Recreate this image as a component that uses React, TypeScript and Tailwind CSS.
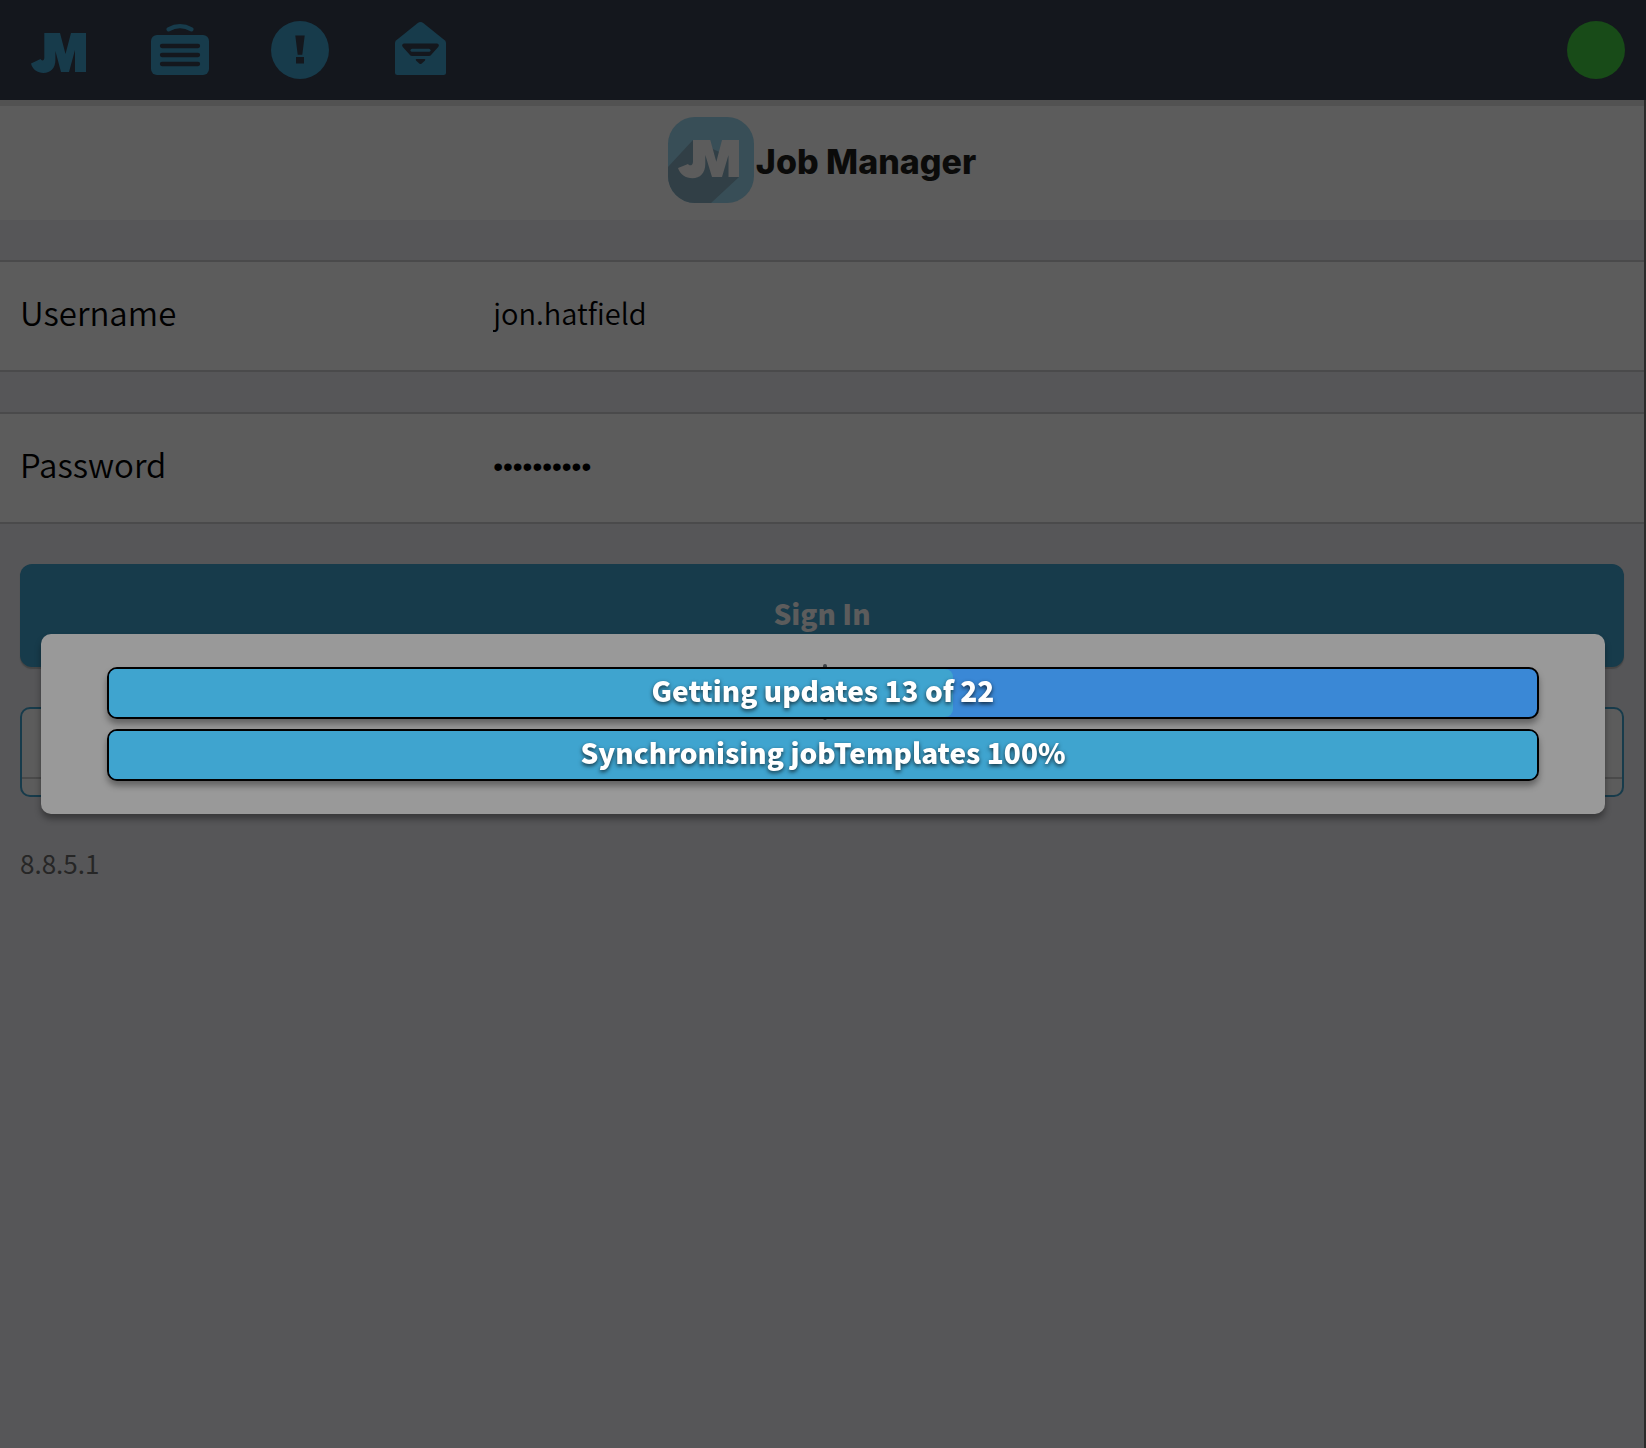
import React, { useState } from "react";

function MarkIcon() {
  return (
    <svg viewBox="30 20 60 60" className="size-[60px]" fill="currentColor" aria-hidden="true">
      <path d="M44.3 33H60L65.5 54L71 33H86V72H75V50L69 72H61L55.4 51V60C55.4 68 50.5 73 43.5 73C37.500 73 32.5 69.500 31 63.500L40.500 59C41.500 61 44.300 61 44.300 58Z" />
    </svg>
  );
}

function JobsIcon() {
  return (
    <svg viewBox="150 20 60 60" className="size-[60px]" aria-hidden="true">
      <path d="M168.500 29.300Q180 23 191.500 29.300" fill="none" stroke="currentColor" strokeWidth="4.300" strokeLinecap="round" />
      <rect x="151" y="35" width="58" height="40" rx="6" fill="currentColor" />
      <path d="M162 46H198M162 55H198M162 64H198" stroke="#14171d" strokeWidth="4.300" strokeLinecap="round" />
    </svg>
  );
}

function AlertIcon() {
  return (
    <svg viewBox="270 20 60 60" className="size-[60px]" aria-hidden="true">
      <circle cx="300" cy="50" r="29" fill="currentColor" />
      <path d="M295.300 35.500H304.700L302.300 54.700H297.700ZM296 57H304V63.500H296Z" fill="#14171d" />
    </svg>
  );
}

function MailIcon() {
  return (
    <svg viewBox="390 20 60 60" className="size-[60px]" aria-hidden="true">
      <path d="M417.500 23.200Q420.500 20.800 423.500 23.200L445 40.500Q446 41.500 446 43V72.500Q446 75 443.500 75H397.500Q395 75 395 72.500V43Q395 41.500 396 40.500Z" fill="currentColor" />
      <path d="M404 43.500H437Q440 44.500 438.200 47L431.500 54.500Q430.500 56 428.500 56H412.500Q410.500 56 409.500 54.500L402.800 47Q401 44.500 404 43.500Z" fill="#14171d" />
      <path d="M412 50.300H429" stroke="currentColor" strokeWidth="3" strokeLinecap="round" />
      <path d="M416.500 59H424.500Q426 59.300 424.800 60.700L421.700 63.500Q420.500 64.500 419.300 63.500L416.200 60.700Q415 59.300 416.500 59Z" fill="#14171d" />
    </svg>
  );
}

function Logo() {
  return (
    <svg viewBox="0 0 86 86" className="size-[86px]" aria-hidden="true">
      <defs>
        <clipPath id="tile">
          <rect width="86" height="86" rx="27" />
        </clipPath>
      </defs>
      <g clipPath="url(#tile)">
        <rect width="86" height="86" fill="#384e57" />
        <path d="M25 23L0 50V86H43L71 60V44Z" fill="#313f46" />
        <path d="M25 23H42.300L48.300 44.700L54 23H71V60H60.500V38L54 60H44L37.300 38V47C37.300 56 32 61.300 24.500 61.300C17.500 61.300 12 57.500 10 51L20 47C21.500 49.500 25 48.500 25 44.700Z" fill="#5c5c5c" />
      </g>
    </svg>
  );
}

const navItems = [
  { label: "Home", Icon: MarkIcon },
  { label: "Jobs", Icon: JobsIcon },
  { label: "Alerts", Icon: AlertIcon },
  { label: "Messages", Icon: MailIcon },
];

function Field({ id, label, type, initial }: { id: string; label: string; type: string; initial: string }) {
  const [value, setValue] = useState(initial);
  return (
    <div className="flex h-28 items-center border-y-2 border-[#4a4a4b] bg-[#5c5c5c] px-5 pb-2 text-black">
      <label htmlFor={id} className="w-[29.500%] text-[33px] leading-10 font-[350]">
        {label}
      </label>
      <input
        id={id}
        type={type}
        value={value}
        onChange={(e) => setValue(e.target.value)}
        className={
          type === "password"
            ? "h-12 min-w-0 flex-1 bg-transparent pt-[6px] font-['Liberation_Sans',sans-serif] text-[28px] outline-none"
            : "h-12 min-w-0 flex-1 bg-transparent text-[29px] font-[350] outline-none"
        }
      />
    </div>
  );
}

function ProgressBar({ text, value, max }: { text: string; value: number; max: number }) {
  return (
    <div
      role="progressbar"
      aria-label={text}
      aria-valuenow={value}
      aria-valuemax={max}
      className="relative h-[52px] rounded-[10px] border-2 border-black bg-[#3a88d6] shadow-[0_5px_6px_rgba(0,0,0,0.35)]"
    >
      <div className="h-full rounded-lg bg-[#3fa4cf]" style={{ width: `${(value / max) * 100}%` }} />
      <span className="absolute inset-0 flex items-center justify-center pb-[6px] text-[28px] leading-none font-black text-white [text-shadow:0_2px_4px_rgba(0,0,0,0.7)]">
        {text}
      </span>
    </div>
  );
}

export default function App() {
  return (
    <div className="min-h-screen bg-[#565658] font-['Noto_Sans_CJK_SC','Noto_Sans',sans-serif]">
      <header className="flex h-[100px] items-center justify-between bg-[#14171d] pr-[21px]">
        <nav className="flex text-[#173b4b]">
          {navItems.map(({ label, Icon }) => (
            <button key={label} type="button" aria-label={label} className="flex w-[120px] justify-center">
              <Icon />
            </button>
          ))}
        </nav>
        <div role="status" aria-label="Online" className="size-[58px] rounded-full bg-[#184b18]" />
      </header>

      <main className="min-h-[calc(100vh-100px)] border-r-2 border-[#2b2b2b]">
        <div className="flex h-[120px] items-center justify-center gap-[2px] border-t-[6px] border-[#525252] bg-[#5c5c5c] pb-[6px]">
          <Logo />
          <h1 className="pt-1 font-[Inter,sans-serif] text-[34px] leading-none font-extrabold text-[#0b0b0a]">Job Manager</h1>
        </div>

        <form onSubmit={(e) => e.preventDefault()} className="flex flex-col gap-10 pt-10">
          <Field id="username" label="Username" type="text" initial="jon.hatfield" />
          <Field id="password" label="Password" type="password" initial="password12" />
          <div className="px-5">
            <button
              type="submit"
              className="h-[103px] w-full rounded-xl bg-[#173b4b] pb-[6px] text-[28px] leading-none font-black text-[#5c5c5c] shadow-[0_2px_1px_#454545]"
            >
              Sign In
            </button>
          </div>
          <div className="px-5">
            <div className="h-[90px] overflow-hidden rounded-[10px] border-2 border-[#173b4b] bg-[#5c5c5c]">
              <div className="h-[70px] border-b-2 border-[#4a4a4a]" />
            </div>
          </div>
        </form>

        <p className="px-5 pt-[46px] text-[26px] leading-10 text-[#262626]">8.8.5.1</p>
      </main>

      <div className="fixed inset-0 flex items-center justify-center px-[41px]">
        <div
          role="dialog"
          aria-label="Synchronising"
          className="relative flex w-full flex-col gap-[10px] rounded-[10px] bg-[#999] px-[66px] py-[33px] shadow-[0_5px_6px_rgba(0,0,0,0.35)]"
        >
          <span className="absolute top-[30px] left-1/2 h-[56px] w-1 rounded-full bg-[#3f4347]" />
          <ProgressBar text="Getting updates 13 of 22" value={13} max={22} />
          <ProgressBar text="Synchronising jobTemplates 100%" value={100} max={100} />
        </div>
      </div>
    </div>
  );
}
